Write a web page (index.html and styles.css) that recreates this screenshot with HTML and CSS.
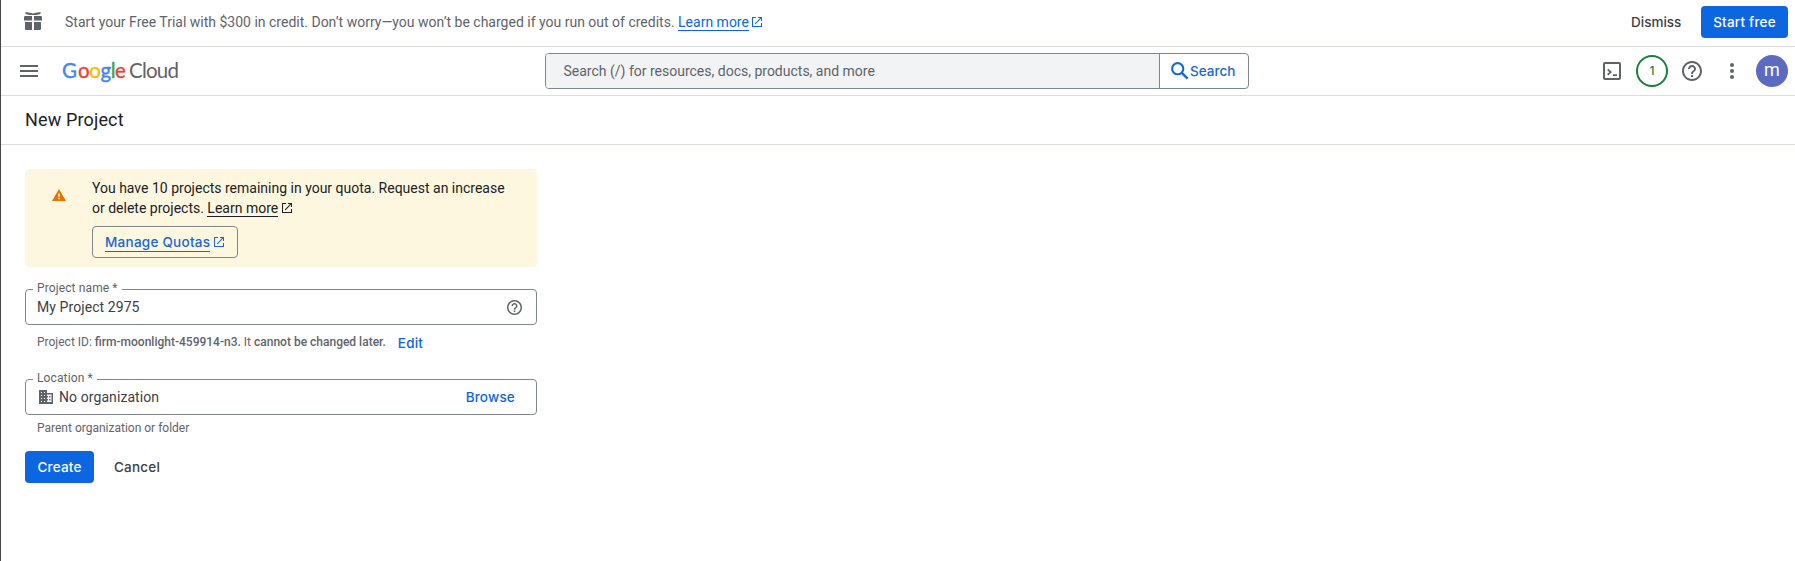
FILE: index.html
```html
<!DOCTYPE html>
<html lang="en">
<head>
<meta charset="utf-8">
<title>New Project – Google Cloud</title>
<link rel="stylesheet" href="styles.css">
</head>
<body>
<svg width="0" height="0" class="defs">
  <symbol id="open" viewBox="0 0 10 10"><path d="M4 .5H.5v9h9V6M6 .5h3.500V4M9.300.7 3.200 6.800" fill="none" stroke="currentColor" stroke-width="1.100"/></symbol>
  <symbol id="help" viewBox="2 2 20 20"><path fill="currentColor" d="M11 18h2v-2h-2v2zm1-16C6.480 2 2 6.480 2 12s4.480 10 10 10 10-4.480 10-10S17.520 2 12 2zm0 18c-4.410 0-8-3.590-8-8s3.590-8 8-8 8 3.590 8 8-3.590 8-8 8zm0-14c-2.210 0-4 1.790-4 4h2c0-1.100.9-2 2-2s2 .9 2 2c0 2-3 1.750-3 5h2c0-2.250 3-2.500 3-5 0-2.210-1.790-4-4-4z"/></symbol>
</svg>
<div class="page">
  <div class="trial">
    <svg class="gift" width="18" height="18" viewBox="0 0 18 18" fill="#5f6368"><path d="M1.500 0 6 .7 9 1.600 12 .7 16.500 0v2l-4 1H5.500l-4-1zM0 5.200Q0 4 1.200 4H8v4.500H0zM10 4h6.800Q18 4 18 5.200v3.300h-8zM1 10h7v8H2.200Q1 18 1 16.800zM10 10h7v6.800q0 1.200-1.200 1.200H10z"/></svg>
    <p class="trial-text">Start your Free Trial with $300 in credit. Don’t worry—you won’t be charged if you run out of credits. <a class="link">Learn more</a><svg class="ext" width="10" height="10"><use href="#open"/></svg></p>
    <button class="btn dismiss">Dismiss</button>
    <button class="btn primary start">Start free</button>
  </div>
  <header class="header">
    <svg class="menu" width="18" height="12"><path d="M0 1h18M0 6h18M0 11h18" stroke="#5f6368" stroke-width="2"/></svg>
    <svg class="logo" width="120" height="30"><text y="22" class="google"><tspan x="0" fill="#4285f4" stroke="#4285f4">G</tspan><tspan x="16" fill="#ea4335" stroke="#ea4335">o</tspan><tspan x="27.200" fill="#fbbc04" stroke="#fbbc04">o</tspan><tspan x="38.500" fill="#4285f4" stroke="#4285f4">g</tspan><tspan x="48.800" fill="#34a853" stroke="#34a853">l</tspan><tspan x="53" fill="#ea4335" stroke="#ea4335">e</tspan></text><text x="67" y="22" class="cloud" textLength="50" lengthAdjust="spacing">Cloud</text></svg>
    <div class="search">
      <div class="search-input">Search (/) for resources, docs, products, and more</div>
      <button class="search-btn"><svg width="18" height="18" viewBox="0 0 18 18" fill="none" stroke="#1967d2"><circle cx="6.700" cy="6.700" r="5.600" stroke-width="2.100"/><path d="m10.800 10.800 5.800 5.800" stroke-width="2.400"/></svg><span>Search</span></button>
    </div>
    <div class="tools">
      <svg class="term" width="18" height="18" fill="none" stroke="#5f6368"><rect x="1" y="1" width="16" height="16" rx="1" stroke-width="2"/><path d="m4.700 7.500 3 2.600-3 2.600M10 13.200h4" stroke-width="1.800"/></svg>
      <div class="count">1</div>
      <svg class="hhelp" width="20" height="20"><use href="#help"/></svg>
      <svg class="dots" width="4" height="16" fill="#5f6368"><circle cx="2" cy="2" r="2"/><circle cx="2" cy="8" r="2"/><circle cx="2" cy="14" r="2"/></svg>
      <div class="avatar">m</div>
    </div>
  </header>
  <div class="titlebar"><h1>New Project</h1></div>
  <main class="main">
    <section class="alert">
      <svg class="warn" width="14" height="12" viewBox="0 0 14 12"><path d="M7 0 14 12H0z" fill="#e37400"/><path d="M7 4.500v3.300M7 8.800v1.500" stroke="#fef7e0" stroke-width="1.400"/></svg>
      <div>
        <p>You have 10 projects remaining in your quota. Request an increase<br>or delete projects. <a class="link">Learn more</a><svg class="ext" width="10" height="10"><use href="#open"/></svg></p>
        <button class="btn quota"><span>Manage Quotas</span><svg width="10" height="10"><use href="#open"/></svg></button>
      </div>
    </section>
    <fieldset class="field">
      <legend>Project name *</legend>
      <div class="row"><span>My Project 2975</span><svg class="fhelp" width="15" height="15"><use href="#help"/></svg></div>
    </fieldset>
    <div class="hint id-hint"><span>Project ID: <b>firm-moonlight-459914-n3.</b> It <b>cannot be changed later.</b></span><a class="edit">Edit</a></div>
    <fieldset class="field">
      <legend>Location *</legend>
      <div class="row"><svg class="org" width="14" height="14" viewBox="0 0 14 14"><path fill="#5f6368" fill-rule="evenodd" d="M0 0h8v3h6v11H0zM2 2v1h1V2zm3 0v1h1V2zM2 5v1h1V5zm3 0v1h1V5zM2 8v1h1V8zm3 0v1h1V8zm-3 3v1h1v-1zm3 0v1h1v-1zM8 4.500V6h1v1.500H8V9h1v1.500H8V12h4.500V4.500zM10 6h1.500v1.500H10zm0 3h1.500v1.500H10z"/></svg><span>No organization</span><a class="browse">Browse</a></div>
    </fieldset>
    <div class="hint parent">Parent organization or folder</div>
    <div class="actions"><button class="btn primary create">Create</button><button class="btn cancel">Cancel</button></div>
  </main>
</div>
</body>
</html>
```
FILE: styles.css
```css
* { box-sizing: border-box; }
body { margin: 0; background: #fff; font: 14px/20px Roboto, sans-serif; color: #202124; }
.defs { position: absolute; }
.page { min-height: 561px; border-left: 1px solid #47484a; }
p, h1 { margin: 0; font-weight: 400; }
svg { flex: none; }
button { font: inherit; background: none; border: 0; padding: 0; color: inherit; white-space: nowrap; }
.btn, .edit, .browse, .search-btn { font: 500 13.5px/20px Inter, sans-serif; letter-spacing: .2px; }
.btn { height: 32px; border-radius: 4px; flex: none; color: #3c4043; }
.btn.primary { background: #0b66e0; color: #fff; }
.trial { display: flex; align-items: center; height: 47px; padding: 0 7px 2px 23px; border-bottom: 1px solid #dadce0; }
.gift { margin: -2px 23px 0 0; }
.trial-text { flex: 1; color: #5f6368; }
.link { border-bottom: 1px solid currentColor; }
.trial .link, .trial .ext { color: #0b66e0; }
.ext { margin-left: 3px; }
.alert .ext { margin-left: 4px; }
.dismiss { width: 50px; margin-right: 20px; letter-spacing: 0; }
.start { width: 87px; }
.header { display: flex; align-items: center; height: 49px; padding: 0 7px 0 19px; border-bottom: 1px solid #dadce0; }
.logo { margin: 0 363px 0 24px; overflow: visible; }
.google, .cloud { font: 20.500px Lato, sans-serif; }
.google { stroke-width: .4px; }
.cloud { fill: #5f6368; }
.search { display: flex; width: 704px; height: 36px; border: 1px solid #80868b; border-radius: 4px; overflow: hidden; flex: none; }
.search-input { flex: 1; background: #f1f3f4; padding: 7px 17.500px; color: #5f6368; }
.search-btn { display: flex; align-items: center; width: 89px; padding-left: 11px; gap: 1px; border-left: 1px solid #80868b; color: #1967d2; letter-spacing: 0; }
.tools { display: flex; align-items: center; margin-left: auto; color: #5f6368; }
.count { width: 32px; height: 32px; border: 2px solid #188038; border-radius: 50%; margin: 0 14px 0 15px; font: 500 12px/28px Inter, sans-serif; color: #188038; text-align: center; }
.dots { margin: 0 22px 0 28px; }
.avatar { width: 32px; height: 32px; border-radius: 50%; background: #5c6bc0; color: #fff; font: 18px/30px Roboto, sans-serif; text-align: center; }
.titlebar { height: 49px; padding: 11px 24px; border-bottom: 1px solid #dadce0; }
h1 { font: 18px/25px Roboto, sans-serif; letter-spacing: .15px; }
.main { width: 536px; padding: 24px 0 0 24px; }
.alert { display: flex; height: 98px; padding: 9px 0 0 27px; border-radius: 4px; background: #fef7e0; }
.warn { margin: 11px 26px 0 0; }
.quota { display: flex; align-items: center; width: 146px; margin-top: 8px; padding-left: 12px; border: 1px solid #80868b; color: #1967d2; }
.quota span { line-height: 17px; padding-top: 1px; border-bottom: 1px solid; margin-right: 4px; letter-spacing: .26px; }
.field { margin: 14px 0 0; padding: 0 11px; width: 512px; height: 44px; border: 1px solid #80868b; border-radius: 4px; min-width: 0; }
.field legend { margin-left: -4px; padding: 0 4px 2px; font-size: 12px; line-height: 14px; letter-spacing: .12px; color: #5f6368; }
.row { display: flex; align-items: center; height: 20px; color: #3c4043; letter-spacing: .08px; }
.fhelp { margin-left: auto; margin-right: 3px; color: #5f6368; }
.org { margin: 0 6px 0 2px; }
.browse { margin-left: auto; margin-right: 10px; color: #0b66e0; }
.hint { padding-left: 12px; color: #5f6368; font-size: 12px; line-height: 16px; }
.hint b { font-weight: 500; }
.id-hint { display: flex; margin-top: 9px; height: 23px; }
.edit { margin-left: 12px; line-height: 19px; color: #0b66e0; }
.parent { margin-top: 5px; }
.actions { display: flex; gap: 20px; margin-top: 15px; }
.create { width: 69px; }
```
